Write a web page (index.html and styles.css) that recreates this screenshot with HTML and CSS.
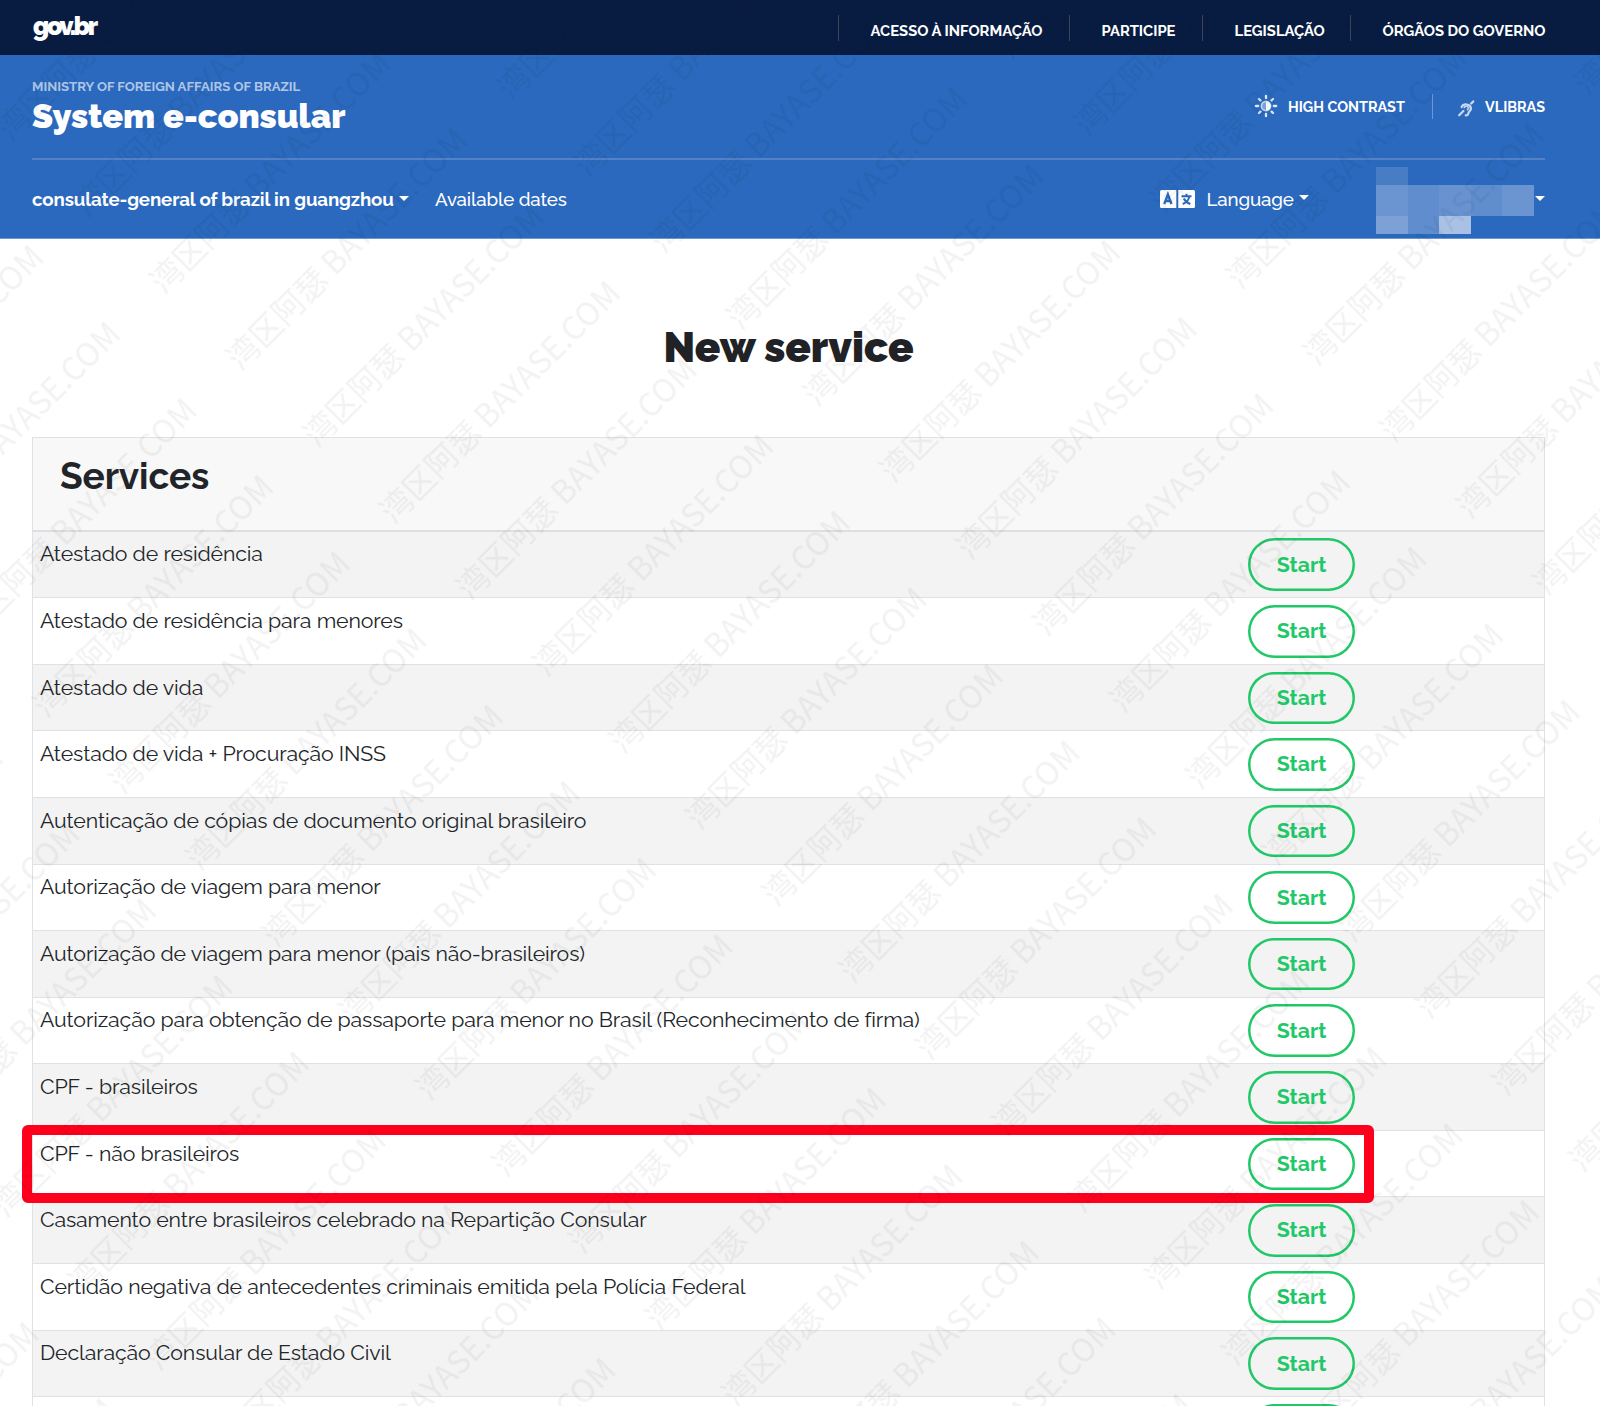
FILE: index.html
```html
<!DOCTYPE html>
<html lang="en">
<head>
    <meta charset="UTF-8">
    <meta name="viewport" content="width=device-width, initial-scale=1.0">
    <title>System e-consular</title>
    <link rel="stylesheet" href="styles.css">
</head>
<body>

    <div class="gov-bar">
        <a class="gov-logo">gov.br</a>
        <ul class="gov-links">
            <li class="gl-acesso"><span>ACESSO À INFORMAÇÃO</span></li>
            <li class="gl-participe"><span>PARTICIPE</span></li>
            <li class="gl-legislacao"><span>LEGISLAÇÃO</span></li>
            <li class="gl-orgaos"><span>ÓRGÃOS DO GOVERNO</span></li>
        </ul>
    </div>

    <header class="header">
        <div class="header-top">
            <div class="brand">
                <div class="brand-ministry">MINISTRY OF FOREIGN AFFAIRS OF BRAZIL</div>
                <div class="brand-title">System e-consular</div>
            </div>
            <div class="tools">
                <a class="tool contrast">
                    <svg width="24" height="24" viewBox="0 0 24 24">
                        <g stroke="#dce7f6" stroke-width="2.3" stroke-linecap="round">
                            <path d="M12 1.8v2.4M12 19.8v2.4M1.8 12h2.4M19.8 12h2.4M5 5l1.4 1.4M17.6 17.6l1.4 1.4M5 19l1.4-1.4M17.6 6.4l1.4-1.4"/>
                        </g>
                        <circle cx="12" cy="12" r="4.6" fill="#7ba2d8" stroke="#c6d8f0" stroke-width="1.6"/>
                        <path d="M12 7.4a4.6 4.6 0 0 1 0 9.2z" fill="#fff"/>
                    </svg>
                    <span>HIGH CONTRAST</span>
                </a>
                <a class="tool vlibras">
                    <svg width="17" height="17" viewBox="0 0 17 17" fill="none" stroke="#c9d9f0" stroke-width="2.2" stroke-linecap="round">
                        <path d="M1.2 15.2l4.2-4.2M13.2 3.6l2-2.2"/>
                        <path d="M3.6 7a5 4.6 0 0 1 9.4 1.3c0 2.7-2.4 3-2.6 4.8-.2 1.7-1.2 2.4-2.7 2.2"/>
                        <path d="M6.2 7.6a2.2 2.2 0 0 1 4.2.4c0 .8-.6 1.3-1 1.8" stroke-width="1.5"/>
                    </svg>
                    <span>VLIBRAS</span>
                </a>
            </div>
        </div>
        <nav class="menu">
            <a class="menu-consulate"><span>consulate-general of brazil in guangzhou</span><i class="caret"></i></a>
            <a class="menu-dates">Available dates</a>
            <a class="menu-language">
                <svg width="35" height="18" viewBox="0 0 35 18">
                    <path d="M1.5 0H16.3V18H1.5A1.5 1.5 0 0 1 0 16.5V1.5A1.5 1.5 0 0 1 1.5 0zM18.3 0H33.5A1.5 1.5 0 0 1 35 1.5V16.5A1.5 1.5 0 0 1 33.5 18H18.3z" fill="#fff"/>
                    <path d="M4.3 14L7.9 4.5L11.5 14M5.5 11H10.3" fill="none" stroke="#2a69bd" stroke-width="2.4"/>
                    <path d="M21.5 6.3H31.5M26.5 3.8V6.3M29.3 6.3C28.7 10 26 12.7 22.7 14M23.8 8.5C25 11 27.5 13 30.3 14" fill="none" stroke="#2a69bd" stroke-width="2"/>
                </svg>
                <span>Language</span><i class="caret"></i>
            </a>
            <a class="menu-user">
                <span class="user-mask">
                    <i class="m1"></i><i></i><i></i><i></i><i></i>
                    <i class="m2"></i><i class="m3"></i><i class="m4"></i><i class="m3"></i><i class="m2"></i>
                    <i class="m5"></i><i class="m3"></i><i class="m6"></i><i></i><i></i>
                </span>
                <i class="caret"></i>
            </a>
        </nav>
    </header>

    <main class="content">
        <h1><span>New service</span></h1>
        <section class="services">
            <div class="services-head"><h2>Services</h2></div>
            <div class="row"><span class="name">Atestado de residência</span><button class="start">Start</button></div>
            <div class="row"><span class="name">Atestado de residência para menores</span><button class="start">Start</button></div>
            <div class="row"><span class="name">Atestado de vida</span><button class="start">Start</button></div>
            <div class="row"><span class="name">Atestado de vida + Procuração INSS</span><button class="start">Start</button></div>
            <div class="row"><span class="name">Autenticação de cópias de documento original brasileiro</span><button class="start">Start</button></div>
            <div class="row"><span class="name">Autorização de viagem para menor</span><button class="start">Start</button></div>
            <div class="row"><span class="name">Autorização de viagem para menor (pais não-brasileiros)</span><button class="start">Start</button></div>
            <div class="row"><span class="name">Autorização para obtenção de passaporte para menor no Brasil (Reconhecimento de firma)</span><button class="start">Start</button></div>
            <div class="row"><span class="name">CPF - brasileiros</span><button class="start">Start</button></div>
            <div class="row"><span class="name">CPF - não brasileiros</span><button class="start">Start</button><div class="highlight"></div></div>
            <div class="row"><span class="name">Casamento entre brasileiros celebrado na Repartição Consular</span><button class="start">Start</button></div>
            <div class="row"><span class="name">Certidão negativa de antecedentes criminais emitida pela Polícia Federal</span><button class="start">Start</button></div>
            <div class="row"><span class="name">Declaração Consular de Estado Civil</span><button class="start">Start</button></div>
            <div class="row"><span class="name"></span><button class="start"></button></div>
        </section>
    </main>

    <!-- repeated diagonal watermark -->
    <svg class="watermark" width="1600" height="1406">
        <defs>
            <pattern id="wm" width="382.4" height="108.3" patternUnits="userSpaceOnUse" patternTransform="translate(344.4 489.5) rotate(-45)">
                <text x="10" y="60">湾区阿瑟 BAYASE.COM</text>
            </pattern>
        </defs>
        <rect width="1600" height="1406" fill="url(#wm)"/>
    </svg>

</body>
</html>
```
FILE: styles.css
```css
* { box-sizing: border-box; }
html, body { margin: 0; padding: 0; }
body { position: relative; height: 1406px; overflow: hidden; background: #fff; color: #212529; font-family: Raleway, Lato, "Open Sans", sans-serif; }
a, span { white-space: nowrap; }

/* top government bar */
.gov-bar { display: flex; justify-content: space-between; height: 54.5px; padding: 0 55px 0 32px; background: #081c42; color: #fff; }
.gov-logo { padding: 9px 0 0 1px; font-size: 25px; line-height: 34px; font-weight: 900; letter-spacing: -2.3px; }
.gov-links { display: flex; margin: 15px 0 0; padding: 0; list-style: none; font-size: 14.8px; font-weight: 700; }
.gov-links li { height: 26px; padding-left: 31.5px; border-left: 1px solid #3c4554; line-height: 31px; }
.gl-acesso { width: 231px; }
.gl-participe { width: 133px; }
.gl-legislacao { width: 148px; }
.gl-orgaos { width: 195px; }

/* blue header */
.header { height: 184.5px; padding: 0 55px 0 32px; background: #2a69bd; border-bottom: 1px solid #6c98d4; color: #fff; }
.header-top { display: flex; justify-content: space-between; height: 105.5px; border-bottom: 2px solid #5482c8; }
.brand { padding-top: 24px; }
.brand-ministry { font-size: 13.2px; line-height: 16px; font-weight: 700; color: #b0c6e7; }
.brand-title { font-size: 34.2px; line-height: 42px; font-weight: 900; }
.tools { display: flex; padding-top: 39px; font-size: 14.4px; font-weight: 700; line-height: 25px; }
.tool { display: flex; height: 25px; }
.contrast { width: 178px; gap: 10px; }
.vlibras { width: 113px; padding-left: 25px; gap: 10px; border-left: 1px solid #6f98d3; }
.vlibras svg { margin-top: 6px; }
.menu { display: flex; height: 78px; font-size: 18.7px; line-height: 24px; letter-spacing: -.13px; font-weight: 500; }
.menu a { padding-top: 27px; }
.caret { display: inline-block; margin-left: 5px; vertical-align: 5px; border-top: 5px solid #fff; border-left: 5px solid transparent; border-right: 5px solid transparent; }
.menu-consulate { width: 403px; font-weight: 700; }
.menu-dates { width: 725px; }
.menu-language { display: flex; width: 216px; }
.menu-language svg { margin: 3px 11.5px 0 0; }
.menu-language .caret, .menu-user .caret { height: 5px; margin-top: 8px; }
.menu .menu-user { display: flex; padding-top: 7px; }
.menu-user .caret { margin: 29px 0 0 1px; }
.user-mask { display: grid; grid-template: 18px 31px 18px / repeat(5, 31.6px); }
.m1 { background: #487dc6; }
.m2 { background: #6b95d1; }
.m3 { background: #5f8dcd; }
.m4 { background: #6893d0; }
.m5 { background: #7da1d6; }
.m6 { background: #a8c1e5; }

/* services table */
.content { padding: 0 55px 0 32px; }
h1 { height: 198px; margin: 0; padding-top: 83px; text-align: center; font-size: 42px; line-height: 52px; font-weight: 900; color: #212225; }
.services { border: 1px solid #dee2e6; }
.services-head { height: 93.7px; padding: 14px 27px; background: #f8f8f8; border-bottom: 2px solid #dbdfe3; }
h2 { margin: 0; font-size: 37px; line-height: 48px; font-weight: 700; letter-spacing: -.1px; }
.row { position: relative; display: flex; justify-content: space-between; height: 66.58px; padding: 6.7px 189px 0 7px; border-bottom: 1px solid #dee2e6; }
.row:nth-child(even) { background: #f3f3f3; }
.name { font-size: 21.3px; line-height: 31.6px; letter-spacing: -.13px; }
.start { width: 107px; height: 52.6px; padding: 0; border: 0; border-radius: 27px; box-shadow: inset 0 0 0 2.5px #20c868; background: transparent; color: #20c868; font: 700 21.3px/30px Raleway, Lato, sans-serif; }
.highlight { position: absolute; left: -11px; top: -6px; width: 1352px; height: 78px; border: 10px solid #ff001c; border-radius: 6px; z-index: 1; }

.watermark { position: absolute; left: 0; top: 0; z-index: 2; pointer-events: none; }
.watermark text { font-family: "Noto Sans CJK SC", sans-serif; font-size: 31.7px; font-weight: 400; fill: #000; fill-opacity: .05; }
```
